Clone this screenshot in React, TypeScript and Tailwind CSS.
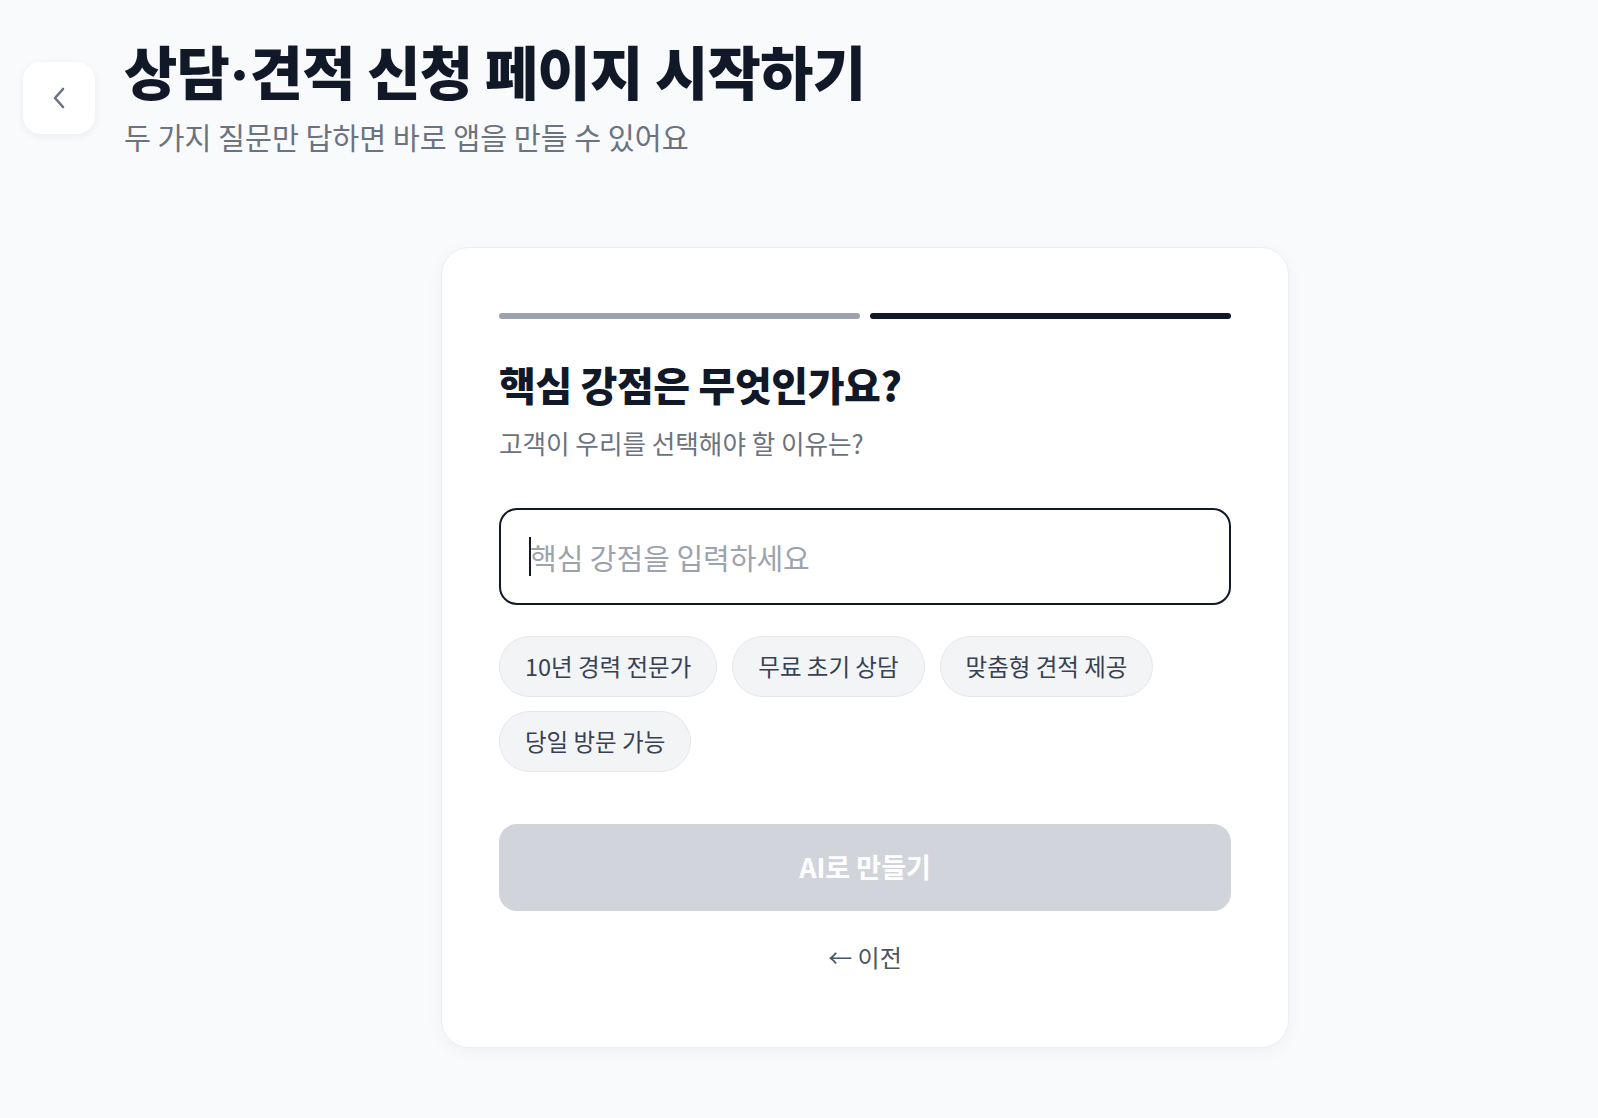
import React from "react";

export default function App() {
  const chips = ["10년 경력 전문가", "무료 초기 상담", "맞춤형 견적 제공", "당일 방문 가능"];
  return (
    <div
      className="min-h-screen bg-[#f9fafb] pb-[70px]"
      style={{ fontFamily: '"Noto Sans CJK KR", "Noto Sans", sans-serif' }}
    >
      <header className="flex items-start gap-[29px] pl-[23px] pt-[38px]">
        <button className="mt-[24px] flex h-[72px] w-[72px] items-center justify-center rounded-[18px] bg-white shadow-[0_2px_8px_rgba(0,0,0,0.06)]">
          <svg width="14" height="22" viewBox="0 0 14 22" fill="none">
            <polyline
              points="11,2 3,11 11,20"
              stroke="#6b7280"
              strokeWidth="2.6"
              strokeLinecap="round"
              strokeLinejoin="round"
            />
          </svg>
        </button>
        <div>
          <h1 className="text-[58px] leading-[64px] font-extrabold tracking-[-0.8px] text-[#111827]">
            상담<span className="font-['Inter'] tracking-normal">·</span>견적 신청 페이지 시작하기
          </h1>
          <p className="mt-[11px] text-[29.3px] leading-[38px] text-[#6b7280]">
            두 가지 질문만 답하면 바로 앱을 만들 수 있어요
          </p>
        </div>
      </header>

      <main className="flex justify-center pl-[132px] pt-[92px]">
        <div className="w-[848px] rounded-[28px] border border-[#eceef1] bg-white px-[57px] pt-[65px] pb-[74px] shadow-[0_4px_18px_rgba(0,0,0,0.04)]">
          <div className="flex gap-[10px]">
            <div className="h-[6px] flex-1 rounded-full bg-[#9ca3af]" />
            <div className="h-[6px] flex-1 rounded-full bg-[#111827]" />
          </div>

          <h2 className="mt-[41px] text-[40px] leading-[48px] font-extrabold tracking-[-0.4px] text-[#111827]">
            핵심 강점은 무엇인가요?
          </h2>
          <p className="mt-[19px] text-[25.6px] leading-[32px] text-[#6b7280]">
            고객이 우리를 선택해야 할 이유는?
          </p>

          <div className="relative mt-[49px]">
            <input
              autoFocus
              type="text"
              placeholder="핵심 강점을 입력하세요"
              className="block h-[97px] w-full rounded-[18px] border-2 border-[#111827] bg-white px-[29px] text-[29px] text-[#111827] caret-transparent outline-none placeholder:text-[#9ca3af]"
            />
            <span className="pointer-events-none absolute left-[30px] top-[29px] h-[39px] w-[2px] bg-[#111827]" />
          </div>

          <div className="mt-[31px] flex flex-wrap gap-x-[15px] gap-y-[14px]">
            {chips.map((c) => (
              <button
                key={c}
                className="flex h-[61px] items-center rounded-full border border-[#e5e7eb] bg-[#f3f4f6] px-[25px] text-[23.5px] text-[#374151]"
              >
                {c}
              </button>
            ))}
          </div>

          <button className="mt-[52px] flex h-[87px] w-full items-center justify-center rounded-[18px] bg-[#d1d5db] text-[27px] font-bold text-white">
            AI로 만들기
          </button>

          <div className="mt-[30px] text-center text-[24px] leading-[32px] text-[#4b5563]">
            ← 이전
          </div>
        </div>
      </main>
    </div>
  );
}
